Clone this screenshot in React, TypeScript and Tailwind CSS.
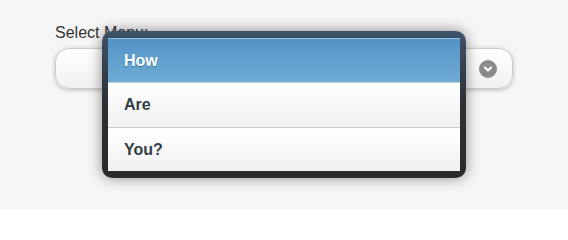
import React from "react";

export default function App() {
  const font = { fontFamily: '"Liberation Sans", Arial, Helvetica, sans-serif' };
  return (
    <div className="relative w-[568px] h-[209px] bg-[#f6f6f6] overflow-hidden" style={font}>
      <div className="px-[55px] pt-[23px]">
        <div className="text-[16px] leading-[19px] text-[#333]">Select Menu:</div>
        <div className="mt-[6px] h-[41px] rounded-[14px] border border-[#cccccc] bg-gradient-to-b from-[#ffffff] to-[#f1f1f1] shadow-[0_1px_4px_rgba(0,0,0,0.25)] flex items-center justify-end pr-[15px]">
          <div className="w-[18px] h-[18px] rounded-full bg-[#8a8a8a] flex items-center justify-center">
            <svg width="10" height="10" viewBox="0 0 10 10">
              <path d="M2 3.5 L5 6.5 L8 3.5" fill="none" stroke="#fff" strokeWidth="2.2" strokeLinecap="round" strokeLinejoin="round" />
            </svg>
          </div>
        </div>
      </div>

      <div className="absolute left-[102px] top-[31px] w-[364px] rounded-[10px] bg-gradient-to-b from-[#3e5268] via-[#2d2f33] to-[#2a2a2a] px-[6px] pt-[7px] pb-[7px] shadow-[0_0_14px_rgba(0,0,0,0.45)]">
        <div className="flex flex-col">
          <div className="h-[44px] flex items-center pl-[16px] border-t border-[#8cc0e8] bg-gradient-to-b from-[#5393c5] to-[#6facd5] text-white font-bold text-[16px] [text-shadow:0_1px_1px_#3373a5]">
            How
          </div>
          <div className="h-[45px] flex items-center pl-[16px] border-t border-[#c8c8c8] bg-gradient-to-b from-[#ffffff] to-[#f1f1f1] text-[#2f3e46] font-bold text-[16px] [text-shadow:0_1px_0_#fff]">
            Are
          </div>
          <div className="h-[44px] flex items-center pl-[16px] border-t border-[#c8c8c8] bg-gradient-to-b from-[#ffffff] to-[#f1f1f1] text-[#2f3e46] font-bold text-[16px] [text-shadow:0_1px_0_#fff]">
            You?
          </div>
        </div>
      </div>
    </div>
  );
}
